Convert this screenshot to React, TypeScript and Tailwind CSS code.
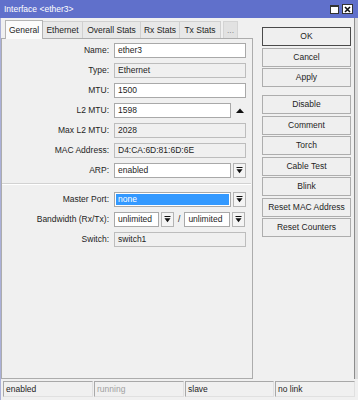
import React from 'react';

const DropIcon = () => (
  <svg width="7" height="7" viewBox="0 0 7 7" className="block">
    <rect x="0.5" y="0" width="6" height="1" fill="#111" />
    <polygon points="0.5,2.3 6.5,2.3 3.5,6.2" fill="#111" />
  </svg>
);

function DropBtn() {
  return (
    <div className="w-[13px] h-[15px] ml-[2px] flex items-center justify-center border border-[#b4b4b4] bg-[#f4f4f4]">
      <DropIcon />
    </div>
  );
}

function Field({ value, readOnly, w = 'w-[132px]' }: { value: string; readOnly?: boolean; w?: string }) {
  return (
    <div
      className={`${w} h-[15px] flex items-center pl-[3px] border ${
        readOnly ? 'bg-[#f0f0f0] border-[#bdbdbd]' : 'bg-white border-[#a9a9a9]'
      }`}
    >
      {value}
    </div>
  );
}

function Row({ label, children }: { label: string; children: React.ReactNode }) {
  return (
    <div className="h-[20px] flex items-center">
      <div className="w-[108px] text-right pr-[1px]">{label}</div>
      <div className="ml-[4px] flex items-center">{children}</div>
    </div>
  );
}

const buttons1 = ['OK', 'Cancel', 'Apply'];
const buttons2 = ['Disable', 'Comment', 'Torch', 'Cable Test', 'Blink', 'Reset MAC Address', 'Reset Counters'];

function Btn({ label, primary }: { label: string; primary?: boolean }) {
  return (
    <div
      className={`w-[89px] h-[19px] flex items-center justify-center bg-[#efefef] border ${
        primary ? 'border-[#4a4a4a]' : 'border-[#adadad]'
      }`}
    >
      {label}
    </div>
  );
}

const tabs = [
  { name: 'Ethernet', w: 'w-[40px]' },
  { name: 'Overall Stats', w: 'w-[58px]' },
  { name: 'Rx Stats', w: 'w-[39px]' },
  { name: 'Tx Stats', w: 'w-[41px]' },
];

export default function App() {
  return (
    <div className="w-[358px] h-[400px] bg-[#f0f0f0] font-['Liberation_Sans',Arial,sans-serif] text-[8.5px] text-[#1e1e1e] flex flex-col overflow-hidden">
      {/* Title bar */}
      <div className="h-[18px] bg-[#6070cb] flex items-center pl-[4px] pr-[5px] text-white">
        <span className="flex-1 text-[8.5px]">Interface &lt;ether3&gt;</span>
        <div className="w-[9px] h-[9px] bg-white border border-[#333] border-t-[2px] mr-[3px]" />
        <div className="w-[11px] h-[10px] bg-white border border-[#333] flex items-center justify-center">
          <svg width="7" height="7" viewBox="0 0 7 7">
            <path d="M1 1L6 6M6 1L1 6" stroke="#111" strokeWidth="1.6" />
          </svg>
        </div>
      </div>

      {/* Body */}
      <div className="h-[361px] flex border-l border-[#aab0d8] border-r-[3px] border-r-[#dcdcdc]">
        {/* Left: tabs + panel */}
        <div className="w-[252px] flex flex-col">
          <div className="h-[20px] flex items-end pl-[4px]">
            <div className="w-[38px] h-[19px] -mb-[1px] flex items-center justify-center bg-[#fbfbfb] border border-b-0 border-[#b4b4b4] z-10">
              General
            </div>
            {tabs.map((t) => (
              <div
                key={t.name}
                className={`${t.w} h-[17px] flex items-center justify-center bg-[#e8e8e8] border border-b-0 border-l-0 border-[#d0d0d0]`}
              >
                {t.name}
              </div>
            ))}
            <div className="w-[15px] h-[17px] ml-[2px] flex items-center justify-center bg-[#e2e2e2] border border-b-0 border-[#d4d4d4] text-[#8a8a8a]">
              ...
            </div>
          </div>
          <div className="flex-1 border border-[#acacac] pt-[1px]">
            <Row label="Name:">
              <Field value="ether3" />
            </Row>
            <Row label="Type:">
              <Field value="Ethernet" readOnly />
            </Row>
            <Row label="MTU:">
              <Field value="1500" />
            </Row>
            <Row label="L2 MTU:">
              <Field value="1598" w="w-[117px]" />
              <svg width="8" height="5" viewBox="0 0 8 5" className="ml-[5px]">
                <polygon points="0,5 8,5 4,0.5" fill="#111" />
              </svg>
            </Row>
            <Row label="Max L2 MTU:">
              <Field value="2028" readOnly />
            </Row>
            <Row label="MAC Address:">
              <Field value="D4:CA:6D:81:6D:6E" readOnly />
            </Row>
            <Row label="ARP:">
              <Field value="enabled" w="w-[117px]" />
              <DropBtn />
            </Row>
            <div className="mt-[3px] mb-[4.5px] h-[2px] border-t border-[#d2d2d2] border-b border-b-white mr-[1px]" />
            <Row label="Master Port:">
              <div className="w-[117px] h-[15px] p-[1px] border border-[#a9a9a9] bg-white">
                <div className="h-full bg-[#3399ff] text-white flex items-center pl-[2px]">none</div>
              </div>
              <DropBtn />
            </Row>
            <Row label="Bandwidth (Rx/Tx):">
              <Field value="unlimited" w="w-[45px]" />
              <DropBtn />
              <span className="mx-[4px]">/</span>
              <Field value="unlimited" w="w-[46px]" />
              <DropBtn />
            </Row>
            <Row label="Switch:">
              <Field value="switch1" readOnly />
            </Row>
          </div>
        </div>

        {/* Right: buttons */}
        <div className="flex-1 pl-[9px] pt-[9px] flex flex-col gap-[1.5px] border-r border-[#8c8c8c]">
          {buttons1.map((b, i) => (
            <Btn key={b} label={b} primary={i === 0} />
          ))}
          <div className="h-[5px]" />
          {buttons2.map((b) => (
            <Btn key={b} label={b} />
          ))}
        </div>
      </div>

      {/* Status bar */}
      <div className="h-[21px] pt-[2px] pl-[2px] flex gap-[1px] border-l border-[#aab0d8]">
        <div className="w-[90px] h-[16px] flex items-center pl-[2px] border border-[#a8a8a8] border-r-[#e0e0e0] border-b-[#e0e0e0]">enabled</div>
        <div className="w-[90px] h-[16px] flex items-center pl-[2px] border border-[#a8a8a8] border-r-[#e0e0e0] border-b-[#e0e0e0] text-[#a0a0a0]">running</div>
        <div className="w-[89px] h-[16px] flex items-center pl-[2px] border border-[#a8a8a8] border-r-[#e0e0e0] border-b-[#e0e0e0]">slave</div>
        <div className="w-[80px] h-[16px] flex items-center pl-[2px] border border-[#a8a8a8] border-r-[#e0e0e0] border-b-[#e0e0e0]">no link</div>
      </div>
    </div>
  );
}
